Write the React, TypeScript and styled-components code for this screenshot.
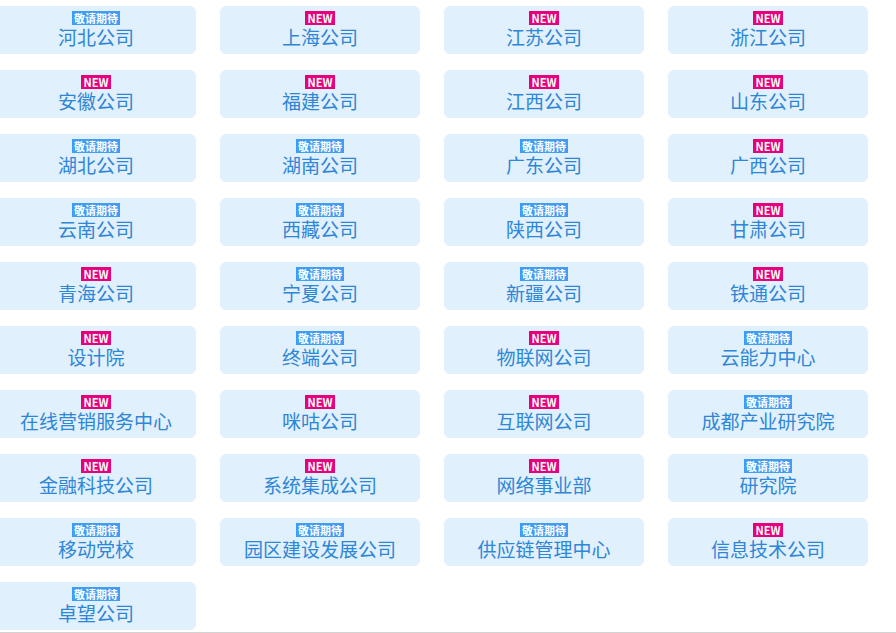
import styled, { createGlobalStyle } from "styled-components";

const GlobalStyle = createGlobalStyle`
  html, body {
    margin: 0;
    padding: 0;
    background: #fff;
    font-family: "Noto Sans CJK SC", "Noto Sans", sans-serif;
  }
`;

const Wrapper = styled.div`
  height: 632px;
  overflow: hidden;
  border-bottom: 1px solid #d3d3d3;
`;

const Grid = styled.div`
  display: grid;
  grid-template-columns: repeat(4, 200px);
  column-gap: 24px;
  row-gap: 16px;
  padding-top: 6px;
  margin-left: -4px;
`;

const Card = styled.div`
  height: 48px;
  box-sizing: border-box;
  padding-top: 5px;
  background: #e1f0fd;
  border-radius: 6px;
  display: flex;
  flex-direction: column;
  align-items: center;
  cursor: pointer;
`;

const Badge = styled.span<{ $new: boolean }>`
  height: 14px;
  line-height: 14px;
  padding: 0 2px;
  font-size: 11px;
  font-weight: bold;
  color: #fff;
  background: ${(p) => (p.$new ? "#e6007e" : "#3f9df4")};
`;

const Name = styled.span`
  font-size: 19px;
  line-height: 24px;
  color: #2d86d6;
  white-space: nowrap;
`;

type Item = [string, boolean];

const items: Item[] = [
  ["河北公司", false], ["上海公司", true], ["江苏公司", true], ["浙江公司", true],
  ["安徽公司", true], ["福建公司", true], ["江西公司", true], ["山东公司", true],
  ["湖北公司", false], ["湖南公司", false], ["广东公司", false], ["广西公司", true],
  ["云南公司", false], ["西藏公司", false], ["陕西公司", false], ["甘肃公司", true],
  ["青海公司", true], ["宁夏公司", false], ["新疆公司", false], ["铁通公司", true],
  ["设计院", true], ["终端公司", false], ["物联网公司", true], ["云能力中心", false],
  ["在线营销服务中心", true], ["咪咕公司", true], ["互联网公司", true], ["成都产业研究院", false],
  ["金融科技公司", true], ["系统集成公司", true], ["网络事业部", true], ["研究院", false],
  ["移动党校", false], ["园区建设发展公司", false], ["供应链管理中心", false], ["信息技术公司", true],
  ["卓望公司", false],
];

const App = () => {
  return (
    <Wrapper>
      <GlobalStyle />
      <Grid>
        {items.map(([name, isNew]) => (
          <Card key={name}>
            <Badge $new={isNew}>{isNew ? "NEW" : "敬请期待"}</Badge>
            <Name>{name}</Name>
          </Card>
        ))}
      </Grid>
    </Wrapper>
  );
};

export default App;
